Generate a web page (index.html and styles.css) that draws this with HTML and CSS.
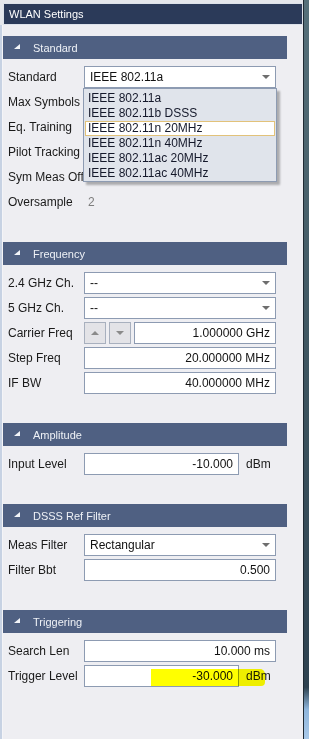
FILE: index.html
```html
<!DOCTYPE html>
<html>
<head>
<meta charset="utf-8">
<link rel="stylesheet" href="styles.css">
</head>
<body>
<div class="window">
  <div class="main">
    <div class="titlebar">WLAN Settings</div>
    <div class="body">
      <div class="strip"></div>
      <div class="panel">

        <section class="section">
          <div class="sec-head"><svg class="tri" width="6" height="5" viewBox="0 0 6 5"><polygon points="6,0 6,5 0,5" fill="#f2f4f8"/></svg><span>Standard</span></div>
          <div class="rows">
            <div class="row">
              <span class="label">Standard</span>
              <div class="field select"><span>IEEE 802.11a</span><svg class="caret" width="8" height="4" viewBox="0 0 8 4"><polygon points="0,0 8,0 4,4" fill="#6e6e6e"/></svg></div>
              <ul class="dropdown">
                <li>IEEE 802.11a</li>
                <li>IEEE 802.11b DSSS</li>
                <li class="hl">IEEE 802.11n 20MHz</li>
                <li>IEEE 802.11n 40MHz</li>
                <li>IEEE 802.11ac 20MHz</li>
                <li>IEEE 802.11ac 40MHz</li>
              </ul>
            </div>
            <div class="row"><span class="label">Max Symbols</span></div>
            <div class="row"><span class="label">Eq. Training</span></div>
            <div class="row"><span class="label">Pilot Tracking</span></div>
            <div class="row"><span class="label">Sym Meas Off</span></div>
            <div class="row"><span class="label">Oversample</span><span class="static">2</span></div>
          </div>
        </section>

        <section class="section">
          <div class="sec-head"><svg class="tri" width="6" height="5" viewBox="0 0 6 5"><polygon points="6,0 6,5 0,5" fill="#f2f4f8"/></svg><span>Frequency</span></div>
          <div class="rows">
            <div class="row">
              <span class="label">2.4 GHz Ch.</span>
              <div class="field select"><span>--</span><svg class="caret" width="8" height="4" viewBox="0 0 8 4"><polygon points="0,0 8,0 4,4" fill="#6e6e6e"/></svg></div>
            </div>
            <div class="row">
              <span class="label">5 GHz Ch.</span>
              <div class="field select"><span>--</span><svg class="caret" width="8" height="4" viewBox="0 0 8 4"><polygon points="0,0 8,0 4,4" fill="#6e6e6e"/></svg></div>
            </div>
            <div class="row">
              <span class="label">Carrier Freq</span>
              <div class="spin-group">
                <div class="spin"><svg width="8" height="4" viewBox="0 0 8 4"><polygon points="0,4 8,4 4,0" fill="#8a8a8a"/></svg></div>
                <div class="spin"><svg width="8" height="4" viewBox="0 0 8 4"><polygon points="0,0 8,0 4,4" fill="#8a8a8a"/></svg></div>
                <div class="field num grow">1.000000 GHz</div>
              </div>
            </div>
            <div class="row">
              <span class="label">Step Freq</span>
              <div class="field num">20.000000 MHz</div>
            </div>
            <div class="row">
              <span class="label">IF BW</span>
              <div class="field num">40.000000 MHz</div>
            </div>
          </div>
        </section>

        <section class="section">
          <div class="sec-head"><svg class="tri" width="6" height="5" viewBox="0 0 6 5"><polygon points="6,0 6,5 0,5" fill="#f2f4f8"/></svg><span>Amplitude</span></div>
          <div class="rows">
            <div class="row unit-row">
              <span class="label">Input Level</span>
              <div class="field num">-10.000</div>
              <span class="unit">dBm</span>
            </div>
          </div>
        </section>

        <section class="section">
          <div class="sec-head"><svg class="tri" width="6" height="5" viewBox="0 0 6 5"><polygon points="6,0 6,5 0,5" fill="#f2f4f8"/></svg><span>DSSS Ref Filter</span></div>
          <div class="rows">
            <div class="row">
              <span class="label">Meas Filter</span>
              <div class="field select"><span>Rectangular</span><svg class="caret" width="8" height="4" viewBox="0 0 8 4"><polygon points="0,0 8,0 4,4" fill="#6e6e6e"/></svg></div>
            </div>
            <div class="row">
              <span class="label">Filter Bbt</span>
              <div class="field num">0.500</div>
            </div>
          </div>
        </section>

        <section class="section">
          <div class="sec-head"><svg class="tri" width="6" height="5" viewBox="0 0 6 5"><polygon points="6,0 6,5 0,5" fill="#f2f4f8"/></svg><span>Triggering</span></div>
          <div class="rows">
            <div class="row">
              <span class="label">Search Len</span>
              <div class="field num">10.000 ms</div>
            </div>
            <div class="row unit-row">
              <span class="label">Trigger Level</span>
              <div class="field num">-30.000</div>
              <span class="unit">dBm</span>
              <span class="highlight"></span>
            </div>
          </div>
        </section>

      </div>
    </div>
  </div>
  <div class="edge"></div>
  <div class="behind"></div>
</div>
</body>
</html>
```
FILE: styles.css
```css
html, body {
  margin: 0;
  padding: 0;
}
body {
  width: 309px;
  height: 739px;
  overflow: hidden;
  font-family: "Liberation Sans", Arial, sans-serif;
  font-size: 12px;
  color: #1a1a1a;
  background: #eeeef2;
}
.window {
  display: flex;
  height: 739px;
}
.main {
  width: 303px;
  display: flex;
  flex-direction: column;
  padding-top: 3px;
  background: #e5e7ec;
}
.titlebar {
  margin-left: 3px;
  height: 22px;
  box-sizing: border-box;
  border: 1px solid #dde2ea;
  background: #2b3a59;
  color: #ffffff;
  font-size: 11px;
  line-height: 20px;
  padding-left: 5px;
}
.body {
  flex: 1;
  display: flex;
}
.strip {
  width: 3px;
  background: #c7d2e3;
}
.panel {
  flex: 1;
  background: #eeeef2;
  padding-top: 11px;
  border-left: 1px solid #f4f4f7;
  margin-left: -1px;
}
.section + .section {
  margin-top: 29px;
}
.sec-head {
  width: 284px;
  height: 23px;
  box-sizing: border-box;
  background: #4f6082;
  display: flex;
  align-items: center;
  gap: 13px;
  padding-left: 11px;
  color: #eef1f6;
  font-size: 11px;
}
.tri {
  display: block;
  margin-top: -2px;
}
.rows {
  display: flex;
  flex-direction: column;
  gap: 3px;
  padding: 7px 0 0 5px;
}
.row {
  position: relative;
  display: grid;
  grid-template-columns: 76px 192px;
  height: 22px;
  align-items: center;
}
.unit-row {
  grid-template-columns: 76px 155px auto;
}
.label {
  white-space: nowrap;
  color: #1a1a1a;
}
.static {
  color: #7d7d7d;
  padding-left: 4px;
}
.unit {
  padding-left: 7px;
  color: #1a1a1a;
}
.field {
  height: 22px;
  box-sizing: border-box;
  border: 1px solid #8d9bb2;
  background: #ffffff;
  display: flex;
  align-items: center;
  padding: 0 5px;
  white-space: nowrap;
  color: #111;
}
.select {
  justify-content: space-between;
}
.caret {
  display: block;
}
.num {
  justify-content: flex-end;
}
.spin-group {
  display: flex;
  gap: 3px;
  height: 22px;
}
.spin {
  width: 22px;
  height: 22px;
  box-sizing: border-box;
  border: 1px solid #a8b0be;
  background: #e3e3e7;
  display: flex;
  align-items: center;
  justify-content: center;
}
.grow {
  flex: 1;
}
.dropdown {
  position: absolute;
  left: 75px;
  top: 22px;
  width: 194px;
  box-sizing: border-box;
  margin: 0;
  padding: 2px 1px 0 1px;
  height: 94px;
  list-style: none;
  background: #e0e4eb;
  border: 1px solid #8d9bb2;
  box-shadow: 3px 3px 2px rgba(0, 0, 0, 0.28);
  z-index: 5;
}
.dropdown li {
  height: 15px;
  box-sizing: border-box;
  border: 1px solid transparent;
  padding-left: 2px;
  line-height: 13px;
  white-space: nowrap;
  color: #14182a;
}
.dropdown li.hl {
  background: #ffffff;
  border-color: #e2c27a;
}
.highlight {
  position: absolute;
  left: 143px;
  top: 4px;
  width: 114px;
  height: 17px;
  background: #ffff00;
  mix-blend-mode: multiply;
  border-radius: 0 5px 4px 0;
  pointer-events: none;
}
.edge {
  width: 1px;
  background: #1f2a33;
}
.behind {
  flex: 1;
  background: linear-gradient(#56707a 0%, #3e5560 50%, #2e4250 93%, #8fb6dc 96%, #a9c9e9 100%);
}
```
